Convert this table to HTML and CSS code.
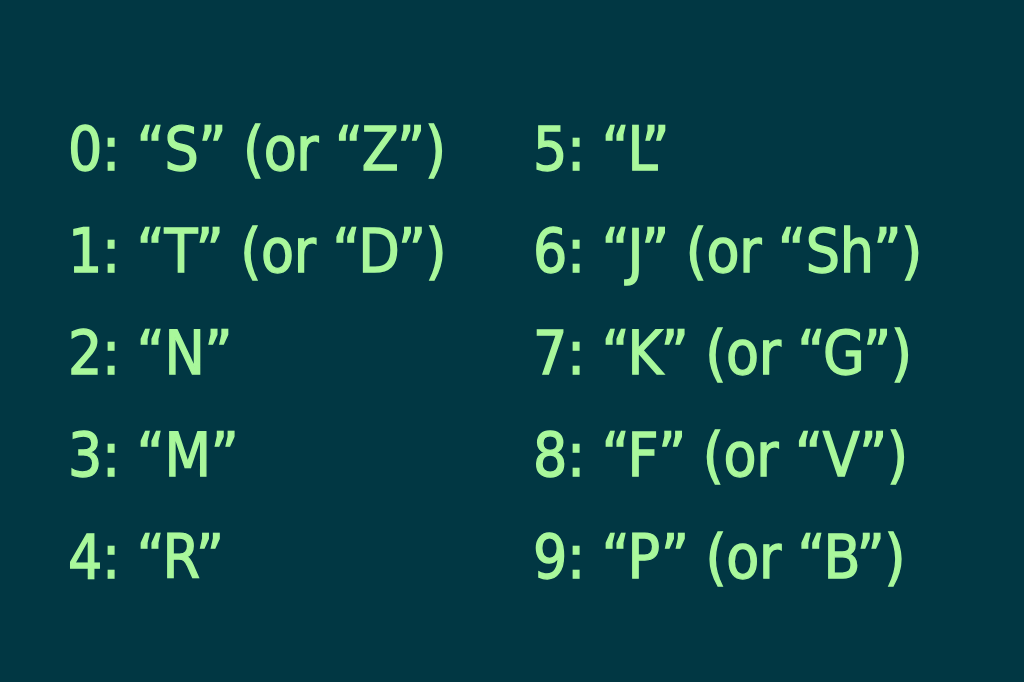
FILE: index.html
```html
<!DOCTYPE html>
<html lang="en">
<head>
<meta charset="utf-8">
<link rel="stylesheet" href="styles.css">
</head>
<body>
<div class="grid">
  <div class="item">0: “S” (or “Z”)</div>
  <div class="item">5: “L”</div>
  <div class="item">1: “T” (or “D”)</div>
  <div class="item">6: “J” (or “Sh”)</div>
  <div class="item">2: “N”</div>
  <div class="item">7: “K” (or “G”)</div>
  <div class="item">3: “M”</div>
  <div class="item">8: “F” (or “V”)</div>
  <div class="item">4: “R”</div>
  <div class="item">9: “P” (or “B”)</div>
</div>
</body>
</html>
```
FILE: styles.css
```css
html, body {
  margin: 0;
  padding: 0;
  width: 1024px;
  height: 682px;
  background: #013743;
  overflow: hidden;
}
.grid {
  display: grid;
  grid-template-columns: 465px auto;
  padding: 98px 0 0 68px;
}
.item {
  font-family: "DejaVu Sans Condensed", "DejaVu Sans", sans-serif;
  font-size: 60px;
  line-height: 102px;
  color: #a9f89b;
  -webkit-text-stroke: 1.3px #a9f89b;
  letter-spacing: -0.3px;
  white-space: nowrap;
}
```
